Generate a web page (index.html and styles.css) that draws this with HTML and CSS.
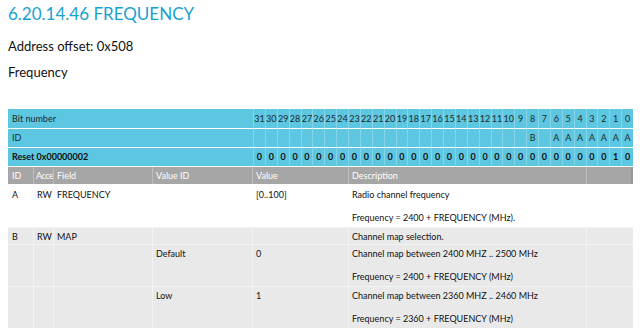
FILE: index.html
```html
<!DOCTYPE html>
<html>
<head>
<meta charset="utf-8">
<link rel="stylesheet" href="styles.css">
</head>
<body>
<h1 class="title">6.20.14.46 FREQUENCY</h1>
<p class="addr">Address offset: 0x508</p>
<p class="desc">Frequency</p>

<table class="bits">
  <colgroup>
    <col class="c-label">
    <col span="32" class="c-bit">
  </colgroup>
  <tr class="row-num">
    <td class="label">Bit number</td>
    <td>31</td><td>30</td><td>29</td><td>28</td><td>27</td><td>26</td><td>25</td><td>24</td>
    <td>23</td><td>22</td><td>21</td><td>20</td><td>19</td><td>18</td><td>17</td><td>16</td>
    <td>15</td><td>14</td><td>13</td><td>12</td><td>11</td><td>10</td><td>9</td><td>8</td>
    <td>7</td><td>6</td><td>5</td><td>4</td><td>3</td><td>2</td><td>1</td><td>0</td>
  </tr>
  <tr class="row-id">
    <td class="label">ID</td>
    <td></td><td></td><td></td><td></td><td></td><td></td><td></td><td></td>
    <td></td><td></td><td></td><td></td><td></td><td></td><td></td><td></td>
    <td></td><td></td><td></td><td></td><td></td><td></td><td></td><td>B</td>
    <td></td><td>A</td><td>A</td><td>A</td><td>A</td><td>A</td><td>A</td><td>A</td>
  </tr>
  <tr class="row-reset">
    <td class="label">Reset 0x00000002</td>
    <td>0</td><td>0</td><td>0</td><td>0</td><td>0</td><td>0</td><td>0</td><td>0</td>
    <td>0</td><td>0</td><td>0</td><td>0</td><td>0</td><td>0</td><td>0</td><td>0</td>
    <td>0</td><td>0</td><td>0</td><td>0</td><td>0</td><td>0</td><td>0</td><td>0</td>
    <td>0</td><td>0</td><td>0</td><td>0</td><td>0</td><td>0</td><td>1</td><td>0</td>
  </tr>
</table>

<table class="fields">
  <colgroup>
    <col class="f-id">
    <col class="f-acc">
    <col class="f-field">
    <col class="f-vid">
    <col class="f-val">
    <col class="f-desc">
    <col class="f-extra">
  </colgroup>
  <tr class="head">
    <td>ID</td><td class="acc">Acce</td><td>Field</td><td>Value ID</td><td>Value</td><td>Description</td><td></td>
  </tr>
  <tr class="plain first">
    <td>A</td><td>RW</td><td>FREQUENCY</td><td></td><td>[0..100]</td>
    <td><p>Radio channel frequency</p><p>Frequency = 2400 + FREQUENCY (MHz).</p></td><td></td>
  </tr>
  <tr class="shade short">
    <td>B</td><td>RW</td><td>MAP</td><td></td><td></td>
    <td><p>Channel map selection.</p></td><td></td>
  </tr>
  <tr class="shade">
    <td></td><td></td><td></td><td>Default</td><td>0</td>
    <td><p>Channel map between 2400 MHZ .. 2500 MHz</p><p>Frequency = 2400 + FREQUENCY (MHz)</p></td><td></td>
  </tr>
  <tr class="shade">
    <td></td><td></td><td></td><td>Low</td><td>1</td>
    <td><p>Channel map between 2360 MHZ .. 2460 MHz</p><p>Frequency = 2360 + FREQUENCY (MHz)</p></td><td></td>
  </tr>
</table>
</body>
</html>
```

FILE: styles.css
```css
html, body {
  margin: 0;
  padding: 0;
  background: #fff;
}
body {
  padding: 0 8px;
  font-family: Lato, "Liberation Sans", sans-serif;
  color: #111;
}
.title {
  margin: 4px 0 0;
  font-size: 17px;
  line-height: 20px;
  font-weight: 400;
  color: #1aa2cf;
}
.addr {
  margin: 14px 0 0;
  font-size: 13px;
  line-height: 16px;
}
.desc {
  margin: 10px 0 0;
  font-size: 13px;
  line-height: 16px;
}

table {
  border-collapse: separate;
  border-spacing: 0;
  table-layout: fixed;
  width: 625px;
  font-size: 9px;
}
td {
  padding: 0;
  overflow: hidden;
  white-space: nowrap;
  vertical-align: top;
}

.bits {
  margin-top: 29px;
}
.c-label { width: 245px; }
.c-bit { width: 11.875px; }
.bits td {
  background: #5dc6e0;
  border-bottom: 1px solid #fff;
  border-left: 1px solid #86d4e8;
  text-align: center;
  line-height: 18px;
  color: #1d2a30;
}
.bits td.label {
  text-align: left;
  padding-left: 4px;
  border-left: none;
}
.row-num td { line-height: 19px; }
.row-reset td { font-weight: 700; color: #111; }

.f-id { width: 25px; }
.f-acc { width: 20px; }
.f-field { width: 99px; }
.f-vid { width: 100px; }
.f-val { width: 96px; }
.f-desc { width: 238px; }
.f-extra { width: 47px; }

.fields td {
  padding: 2px 3px 3px 3px;
  line-height: 13px;
  border-top: 1px solid #fff;
  border-left: 1px solid transparent;
}
.fields td:first-child {
  padding-left: 4px;
  border-left: none;
}
.fields p { margin: 0; }
.fields p + p { margin-top: 10px; }

.fields .head td {
  background: #a6a6a6;
  color: #fff;
  padding: 2px 3px;
  border-top: none;
  border-left-color: #bdbdbd;
}
.fields .head td:first-child { padding-left: 4px; border-left: none; }
.fields .head td.acc {
  padding-left: 2px;
  padding-right: 0;
  letter-spacing: -0.5px;
}
.fields .head td:last-child { box-shadow: inset -2px 0 0 #999; }

.fields .plain td { background: #fff; }
.fields .plain.first td { padding-top: 3px; }
.fields .shade td {
  background: #e9e9e9;
  border-top-color: #f4f4f4;
  border-left-color: #f3f3f3;
}
.fields .shade.short td { padding-bottom: 1px; }
.fields .shade td:first-child { border-left: none; }
```
